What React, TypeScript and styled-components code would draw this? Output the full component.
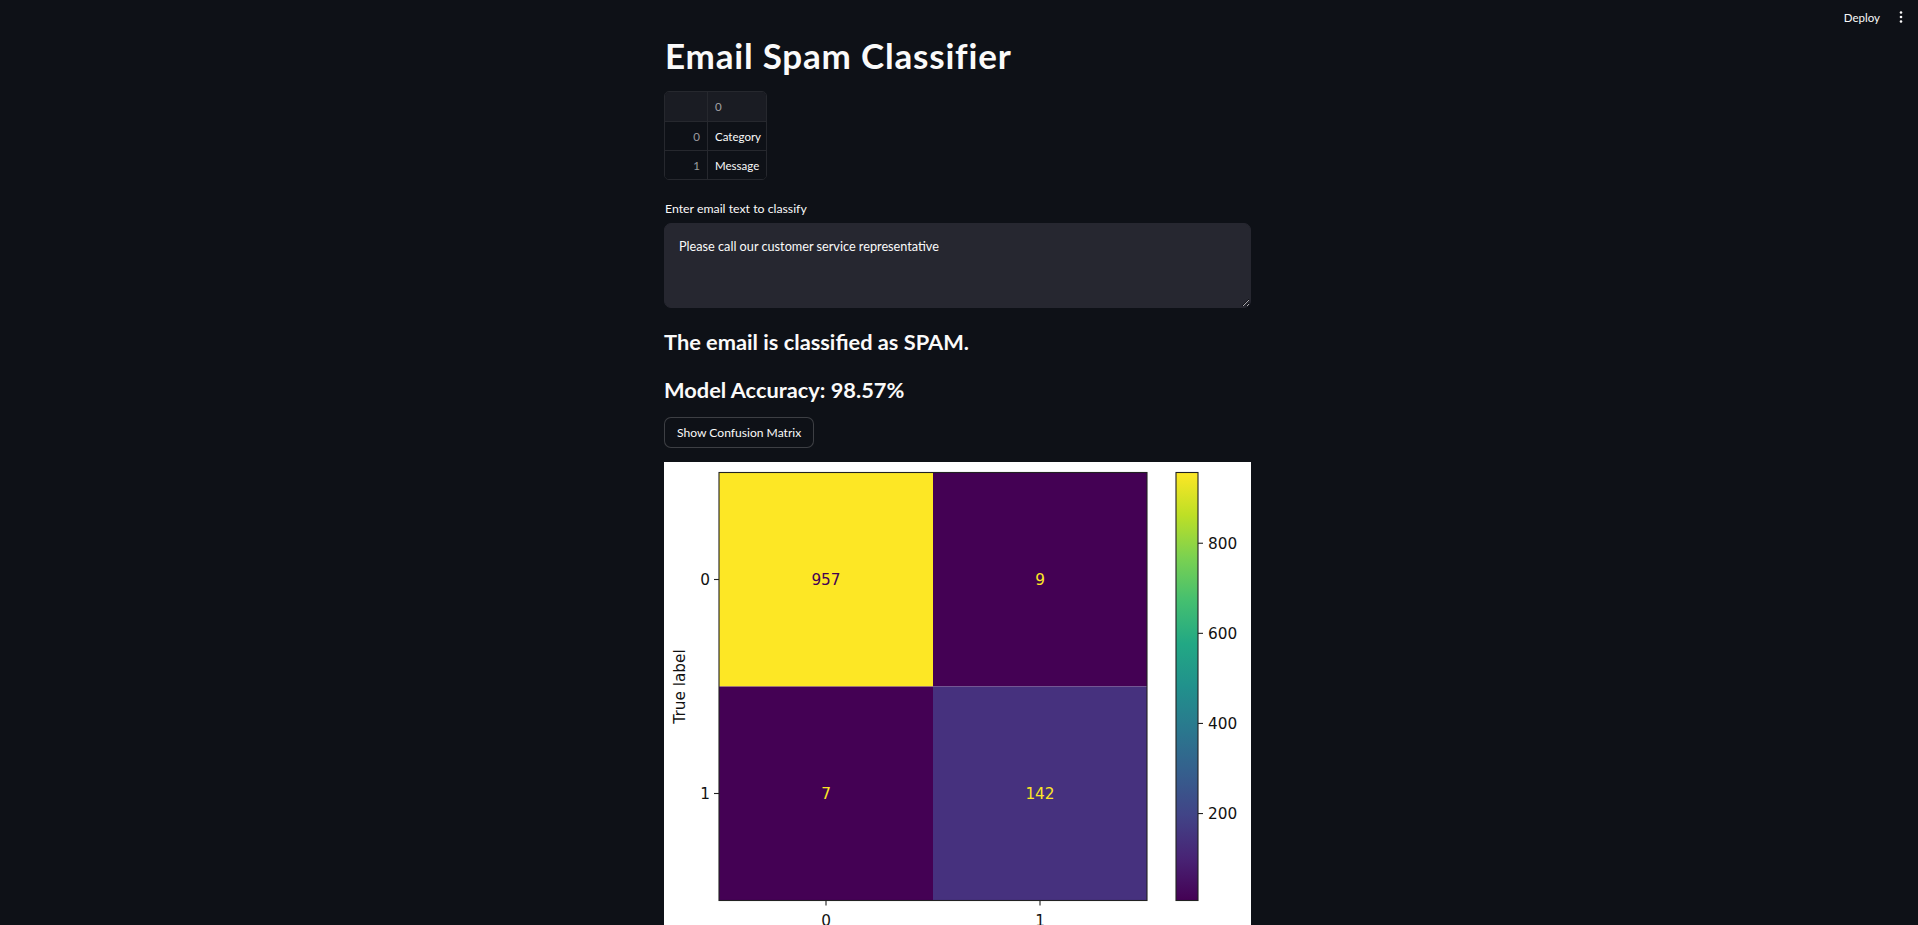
import React from "react";
import styled, { createGlobalStyle } from "styled-components";

const GlobalStyle = createGlobalStyle`
  html, body {
    margin: 0;
    padding: 0;
    background: #0e1117;
    overflow: hidden;
  }
  body {
    font-family: Lato, "Liberation Sans", sans-serif;
    color: #fafafa;
  }
  * { box-sizing: border-box; }
`;

const Page = styled.div`
  width: 1918px;
  height: 925px;
  background: #0e1117;
  display: flex;
  flex-direction: column;
  overflow: hidden;
`;

const Header = styled.header`
  height: 34px;
  display: flex;
  align-items: center;
  justify-content: flex-end;
  gap: 18px;
  padding-right: 14px;
  flex-shrink: 0;
`;

const DeployButton = styled.button`
  background: transparent;
  border: none;
  color: #fafafa;
  font-family: Lato, "Liberation Sans", sans-serif;
  font-size: 11.5px;
  padding: 0;
  cursor: pointer;
`;

const MenuButton = styled.button`
  background: transparent;
  border: none;
  padding: 0;
  width: 6px;
  height: 14px;
  display: flex;
  align-items: center;
  justify-content: center;
  cursor: pointer;
`;

const Main = styled.main`
  display: flex;
  justify-content: center;
  padding-right: 3px;
`;

const Column = styled.div`
  width: 587px;
  display: flex;
  flex-direction: column;
  align-items: flex-start;
`;

const Title = styled.h1`
  margin: 1px 0 0 0;
  font-size: 35px;
  line-height: 40px;
  letter-spacing: 0.8px;
  font-weight: 700;
  color: #fafafa;
  padding-left: 1px;
`;

const Table = styled.div`
  margin-top: 16px;
  display: grid;
  grid-template-columns: 43px 58px;
  border: 1px solid #26282e;
  border-radius: 5px;
  overflow: hidden;
  font-size: 11.5px;
`;

const Cell = styled.div<{ $head?: boolean; $index?: boolean; $last?: boolean; $bottom?: boolean }>`
  height: ${(p) => (p.$head ? 30 : p.$bottom ? 28 : 29)}px;
  display: flex;
  align-items: center;
  justify-content: ${(p) => (p.$index ? "flex-end" : "flex-start")};
  padding: ${(p) => (p.$index ? "0 7px 0 0" : "0 0 0 7px")};
  background: ${(p) => (p.$head ? "#1a1c23" : "#0e1117")};
  color: ${(p) => (p.$head || p.$index ? "rgba(250,250,250,0.6)" : "#fafafa")};
  border-right: ${(p) => (p.$last ? "none" : "1px solid #26282e")};
  border-bottom: ${(p) => (p.$bottom ? "none" : "1px solid #26282e")};
`;

const Label = styled.label`
  margin-top: 20.5px;
  font-size: 12.3px;
  line-height: 16px;
  color: #fafafa;
  padding-left: 1px;
`;

const TextArea = styled.textarea`
  margin-top: 6.5px;
  width: 587px;
  height: 85px;
  background: #262730;
  border: 1px solid #262730;
  border-radius: 7px;
  color: #fafafa;
  font-family: Lato, "Liberation Sans", sans-serif;
  font-size: 12.7px;
  line-height: 20px;
  padding: 11.8px 14px;
  resize: vertical;
  outline: none;
`;

const Heading = styled.h3<{ $gap: number }>`
  margin: ${(p) => p.$gap}px 0 0 0;
  font-size: 21.8px;
  line-height: 30px;
  font-weight: 700;
  color: #fafafa;
  padding-left: 0;
`;

const Button = styled.button`
  margin-top: 12.5px;
  height: 31px;
  padding: 0 12px;
  background: #0e1117;
  border: 1px solid rgba(250, 250, 250, 0.2);
  border-radius: 7px;
  color: #fafafa;
  font-family: Lato, "Liberation Sans", sans-serif;
  font-size: 12.1px;
  cursor: pointer;
`;

const Figure = styled.div`
  margin-top: 14px;
  width: 587px;
  height: 520px;
  background: #ffffff;
  flex-shrink: 0;
`;

const viridis = [
  "#440154",
  "#482475",
  "#414487",
  "#355f8d",
  "#2a788e",
  "#21918c",
  "#22a884",
  "#44bf70",
  "#7ad151",
  "#bddf26",
  "#fde725",
];

const MPL_FONT = '"DejaVu Sans", sans-serif';
const MPL_SIZE = 15.3;

function ConfusionMatrix() {
  const ax = { x: 55, y: 10.5, s: 428 };
  const half = ax.s / 2;
  const cells = [
    { r: 0, c: 0, v: "957", fill: "#fde725", color: "#440154" },
    { r: 0, c: 1, v: "9", fill: "#440154", color: "#fde725" },
    { r: 1, c: 0, v: "7", fill: "#440154", color: "#fde725" },
    { r: 1, c: 1, v: "142", fill: "#46317e", color: "#fde725" },
  ];
  const cb = { x: 512, w: 22 };
  const vmin = 7;
  const vmax = 957;
  const yOf = (v: number) => ax.y + ax.s - ((v - vmin) / (vmax - vmin)) * ax.s;
  return (
    <svg width="587" height="520" viewBox="0 0 587 520">
      <defs>
        <linearGradient id="viridis" x1="0" y1="1" x2="0" y2="0">
          {viridis.map((c, i) => (
            <stop key={i} offset={`${i * 10}%`} stopColor={c} />
          ))}
        </linearGradient>
      </defs>
      {cells.map((cell) => (
        <g key={`${cell.r}-${cell.c}`}>
          <rect
            x={ax.x + cell.c * half}
            y={ax.y + cell.r * half}
            width={half}
            height={half}
            fill={cell.fill}
          />
          <text
            x={ax.x + cell.c * half + half / 2}
            y={ax.y + cell.r * half + half / 2 + 5.5}
            textAnchor="middle"
            fontFamily={MPL_FONT}
            fontSize={MPL_SIZE}
            fill={cell.color}
          >
            {cell.v}
          </text>
        </g>
      ))}
      <rect x={ax.x} y={ax.y} width={ax.s} height={ax.s} fill="none" stroke="#222" strokeWidth="1.1" />
      {[0, 1].map((i) => (
        <g key={`yt${i}`}>
          <line
            x1={ax.x - 5}
            x2={ax.x}
            y1={ax.y + half * i + half / 2}
            y2={ax.y + half * i + half / 2}
            stroke="#222"
            strokeWidth="1.1"
          />
          <text
            x={ax.x - 9}
            y={ax.y + half * i + half / 2 + 5.5}
            textAnchor="end"
            fontFamily={MPL_FONT}
            fontSize={MPL_SIZE}
            fill="#111"
          >
            {i}
          </text>
          <line
            x1={ax.x + half * i + half / 2}
            x2={ax.x + half * i + half / 2}
            y1={ax.y + ax.s}
            y2={ax.y + ax.s + 5}
            stroke="#222"
            strokeWidth="1.1"
          />
          <text
            x={ax.x + half * i + half / 2}
            y={ax.y + ax.s + 25}
            textAnchor="middle"
            fontFamily={MPL_FONT}
            fontSize={MPL_SIZE}
            fill="#111"
          >
            {i}
          </text>
        </g>
      ))}
      <text
        transform={`translate(21, ${ax.y + half}) rotate(-90)`}
        textAnchor="middle"
        fontFamily={MPL_FONT}
        fontSize={MPL_SIZE}
        fill="#111"
      >
        True label
      </text>
      <rect x={cb.x} y={ax.y} width={cb.w} height={ax.s} fill="url(#viridis)" stroke="#222" strokeWidth="1.1" />
      {[200, 400, 600, 800].map((v) => (
        <g key={`cb${v}`}>
          <line x1={cb.x + cb.w} x2={cb.x + cb.w + 5} y1={yOf(v)} y2={yOf(v)} stroke="#222" strokeWidth="1.1" />
          <text x={cb.x + cb.w + 10} y={yOf(v) + 5.5} fontFamily={MPL_FONT} fontSize={MPL_SIZE} fill="#111">
            {v}
          </text>
        </g>
      ))}
    </svg>
  );
}

function KebabIcon() {
  return (
    <svg width="4" height="14" viewBox="0 0 4 14">
      <circle cx="2" cy="2.5" r="1.3" fill="#fafafa" />
      <circle cx="2" cy="7" r="1.3" fill="#fafafa" />
      <circle cx="2" cy="11.5" r="1.3" fill="#fafafa" />
    </svg>
  );
}

export default function App() {
  return (
    <Page>
      <GlobalStyle />
      <Header>
        <DeployButton>Deploy</DeployButton>
        <MenuButton aria-label="Main menu">
          <KebabIcon />
        </MenuButton>
      </Header>
      <Main>
        <Column>
          <Title>Email Spam Classifier</Title>
          <Table>
            <Cell $head $index></Cell>
            <Cell $head $last>0</Cell>
            <Cell $index>0</Cell>
            <Cell $last>Category</Cell>
            <Cell $index $bottom>1</Cell>
            <Cell $last $bottom>Message</Cell>
          </Table>
          <Label>Enter email text to classify</Label>
          <TextArea defaultValue="Please call our customer service representative" />
          <Heading $gap={18.5}>The email is classified as SPAM.</Heading>
          <Heading $gap={18}>Model Accuracy: 98.57%</Heading>
          <Button>Show Confusion Matrix</Button>
          <Figure>
            <ConfusionMatrix />
          </Figure>
        </Column>
      </Main>
    </Page>
  );
}
